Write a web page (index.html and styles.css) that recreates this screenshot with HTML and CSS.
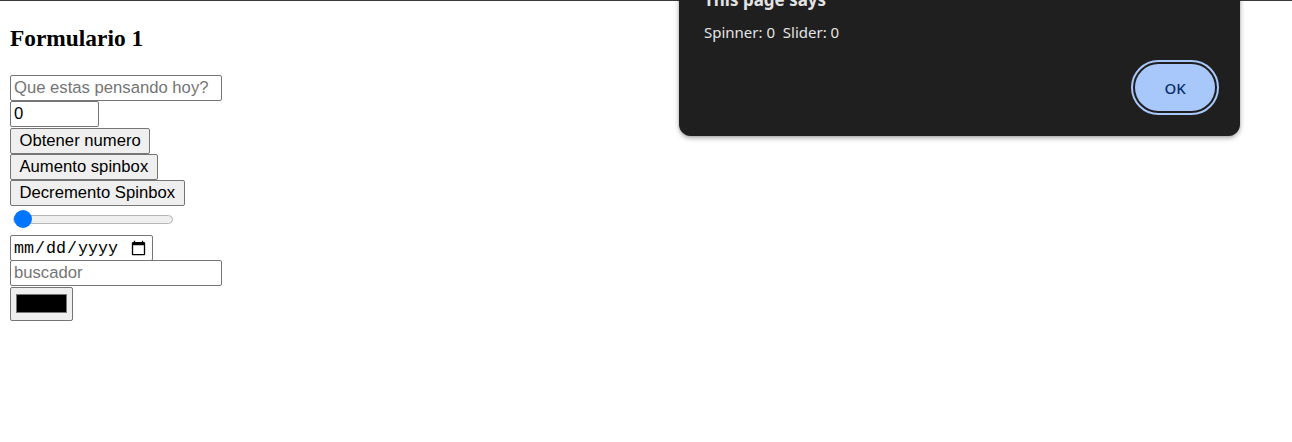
FILE: index.html
```html
<!DOCTYPE html>
<html lang="es">
<head>
<meta charset="utf-8">
<title>Formulario 1</title>
<link rel="stylesheet" href="styles.css">
</head>
<body>
<div class="topline"></div>
<main class="page">
  <h3 class="title">Formulario 1</h3>
  <form class="controls">
    <input class="field text" type="text" placeholder="Que estas pensando hoy?">
    <input class="field num" type="number" value="0">
    <button class="btn" type="button">Obtener numero</button>
    <button class="btn" type="button">Aumento spinbox</button>
    <button class="btn" type="button">Decremento Spinbox</button>
    <input class="range" type="range" min="0" max="100" value="0">
    <input class="field date" type="date">
    <input class="field text search" type="search" placeholder="buscador">
    <input class="color" type="color" value="#000000">
  </form>
</main>

<div class="dialog" role="alertdialog">
  <div class="dlg-title">This page says</div>
  <div class="dlg-msg">Spinner: 0&nbsp;&nbsp;Slider: 0</div>
  <div class="dlg-actions">
    <button class="dlg-ok" type="button">OK</button>
  </div>
</div>
</body>
</html>
```

FILE: styles.css
```css
html, body {
  margin: 0;
  padding: 0;
  background: #ffffff;
}

body {
  font-family: "Liberation Serif", "Times New Roman", serif;
  overflow: hidden;
}

.topline {
  height: 1px;
  background: #3a3a3a;
}

.page {
  padding: 0 10px;
}

.title {
  margin: 0;
  padding-top: 24px;
  font-size: 23.4px;
  line-height: 26px;
  font-weight: bold;
  color: #000;
}

.controls {
  margin-top: 24px;
  display: flex;
  flex-direction: column;
  align-items: flex-start;
}

.field,
.btn,
.color {
  box-sizing: border-box;
  margin: 0;
  font-family: "Liberation Sans", Arial, sans-serif;
  font-size: 16.67px;
  color: #000;
  border: 1px solid #767676;
  border-radius: 2px;
}

.field {
  height: 26px;
  padding: 0 3px;
  background: #fff;
}

.field::placeholder {
  color: #757575;
}

.text {
  width: 212px;
}

.num {
  width: 89px;
}

.btn {
  height: 26px;
  padding: 0 8.5px;
  background: #efefef;
}

.num + .btn {
  margin-top: 1px;
}

.range {
  -webkit-appearance: none;
  appearance: none;
  width: 160px;
  height: 20px;
  margin: 3px 0 6px 3px;
  padding: 0;
  background: transparent;
}

.range::-webkit-slider-runnable-track {
  height: 9px;
  box-sizing: border-box;
  background: #efefef;
  border: 1px solid #b5b5b5;
  border-radius: 5px;
}

.range::-webkit-slider-thumb {
  -webkit-appearance: none;
  appearance: none;
  width: 18px;
  height: 18px;
  margin-top: -5.5px;
  border: none;
  border-radius: 50%;
  background: #0075ff;
}

.date {
  width: 143px;
  padding: 0 3px 0 2px;
  font-family: "Liberation Mono", "DejaVu Sans Mono", monospace;
  font-size: 16.67px;
}

.search {
  margin-top: -1px;
}

.color {
  width: 63px;
  height: 34px;
  padding: 6px 5px 7px 5px;
  background: #efefef;
  margin-top: 1px;
}

.color::-webkit-color-swatch-wrapper {
  padding: 0;
}

.color::-webkit-color-swatch {
  border: 1px solid #777777;
  border-radius: 0;
}

.dialog {
  position: absolute;
  left: 679px;
  top: -30px;
  width: 561px;
  box-sizing: border-box;
  padding: 20px 25px 25px 25px;
  background: #1f1f1f;
  color: #e3e3e3;
  border-radius: 12px;
  box-shadow: 0 2px 5px rgba(0, 0, 0, 0.35), 0 0 1px rgba(0, 0, 0, 0.4);
  font-family: "Noto Sans", "Open Sans", sans-serif;
}

.dlg-title {
  font-size: 17px;
  font-weight: bold;
  line-height: 20px;
}

.dlg-msg {
  margin-top: 12px;
  font-size: 15px;
  line-height: 20px;
  white-space: pre;
}

.dlg-actions {
  margin-top: 22px;
  display: flex;
  justify-content: flex-end;
}

.dlg-ok {
  width: 80px;
  height: 47px;
  border: none;
  border-radius: 24px;
  background: #a8c7fa;
  color: #062e6f;
  font-family: "Noto Sans", "Open Sans", sans-serif;
  font-size: 15px;
  font-weight: 500;
  outline: 2px solid #a8c7fa;
  outline-offset: 2px;
}
```
